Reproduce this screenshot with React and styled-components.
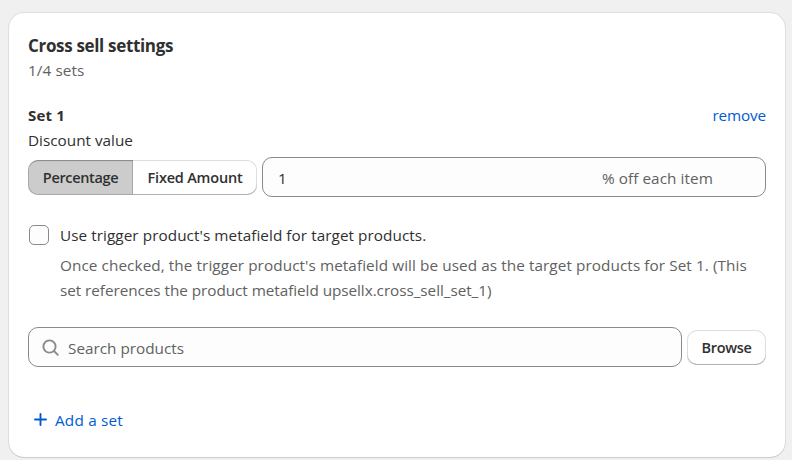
import React, { useState } from "react";
import styled, { createGlobalStyle, css } from "styled-components";

const COLOR = {
  PAGE: "#f0f0f0",
  TEXT: "#303030",
  SUBDUED: "#616161",
  LINK: "#005bd3",
  BORDER: "#8a8a8a",
  FIELD: "#fdfdfd",
  PRESSED: "#cccccc",
};

const App = () => {
  const [discountType, setDiscountType] = useState("percentage");
  const [discount, setDiscount] = useState("1");
  const [search, setSearch] = useState("");

  return (
    <>
      <GlobalStyle />
      <StyledCard>
        <StyledTitle>Cross sell settings</StyledTitle>
        <StyledCount>1/4 sets</StyledCount>

        <StyledSetHeader>
          <StyledSetName>Set 1</StyledSetName>
          <StyledRemove>remove</StyledRemove>
        </StyledSetHeader>
        <StyledLabel>Discount value</StyledLabel>
        <StyledDiscountRow>
          <StyledSegments>
            <StyledSegment
              $width={105}
              $spacing={-0.35}
              $pressed={discountType === "percentage"}
              onClick={() => setDiscountType("percentage")}
            >
              Percentage
            </StyledSegment>
            <StyledSegment
              $width={124}
              $spacing={-0.2}
              $pressed={discountType === "fixed"}
              onClick={() => setDiscountType("fixed")}
            >
              Fixed Amount
            </StyledSegment>
          </StyledSegments>
          <StyledField $padding="2px 52px 0 15px">
            <StyledInput
              value={discount}
              onChange={(e) => setDiscount(e.target.value)}
            />
            <StyledSuffix>% off each item</StyledSuffix>
          </StyledField>
        </StyledDiscountRow>

        <StyledCheckRow>
          <StyledCheckbox type="checkbox" />
          <div>
            <StyledCheckLabel>
              Use trigger product's metafield for target products.
            </StyledCheckLabel>
            <StyledHelp>
              <StyledHelpLine $spacing={0.08}>
                Once checked, the trigger product's metafield will be used as
                the target products for Set 1. (This
              </StyledHelpLine>
              <StyledHelpLine $spacing={-0.05}>
                set references the product metafield upsellx.cross_sell_set_1)
              </StyledHelpLine>
            </StyledHelp>
          </div>
        </StyledCheckRow>

        <StyledSearchRow>
          <StyledField $padding="2px 12px 0 13px">
            <SearchIcon />
            <StyledInput
              placeholder="Search products"
              value={search}
              onChange={(e) => setSearch(e.target.value)}
            />
          </StyledField>
          <StyledBrowse>Browse</StyledBrowse>
        </StyledSearchRow>

        <StyledAddSet>
          <PlusIcon />
          Add a set
        </StyledAddSet>
      </StyledCard>
    </>
  );
};

export default App;

const SearchIcon = () => (
  <StyledSearchIcon viewBox="0 0 18 18">
    <circle cx="7.5" cy="7.5" r="6.1" />
    <path d="M12 12l3.8 3.8" />
  </StyledSearchIcon>
);

const PlusIcon = () => (
  <StyledPlusIcon viewBox="0 0 13 13">
    <path d="M6.5 1v11M1 6.5h11" />
  </StyledPlusIcon>
);

const GlobalStyle = createGlobalStyle`
  * {
    box-sizing: border-box;
  }

  body {
    margin: 0;
    height: 460px;
    overflow: hidden;
    background: ${COLOR.PAGE};
    color: ${COLOR.TEXT};
    font: 400 15.3px/25px "Open Sans", "Noto Sans", sans-serif;
  }

  button,
  input {
    margin: 0;
    padding: 0;
    border: 0;
    background: none;
    color: inherit;
    font: inherit;
  }
`;

const buttonShadow = css`
  box-shadow: inset 0 -1px 0 #b0b0b0, inset 0 0 0 1px #dedede;
`;

const StyledCard = styled.main`
  display: flex;
  flex-direction: column;
  width: 776px;
  height: 444px;
  margin: 13px 0 0 9px;
  padding: 20px 19px;
  border-radius: 15px;
  background: #fff;
  box-shadow: 0 1px 0 #cccccc, 0 0 0 1px #dedede;
`;

const StyledTitle = styled.h2`
  margin: 0;
  font-size: 17px;
  font-weight: 700;
  letter-spacing: -0.33px;
`;

const StyledCount = styled.div`
  color: ${COLOR.SUBDUED};
  letter-spacing: 0.1px;
`;

const StyledSetHeader = styled.div`
  display: flex;
  justify-content: space-between;
  margin-top: 20px;
`;

const StyledSetName = styled.strong`
  font-size: 15px;
  font-weight: 700;
  letter-spacing: 0.2px;
`;

const StyledRemove = styled.button`
  color: ${COLOR.LINK};
  letter-spacing: -0.15px;
`;

const StyledLabel = styled.div``;

const StyledDiscountRow = styled.div`
  display: flex;
  align-items: center;
  gap: 5px;
  margin-top: 4px;
`;

const StyledSegments = styled.div`
  display: flex;
  flex: none;
  height: 35px;
  border-radius: 10px;
  overflow: hidden;
  ${buttonShadow};
`;

const StyledSegment = styled.button`
  width: ${({ $width }) => $width}px;
  font-size: 14.5px;
  font-weight: 600;
  letter-spacing: ${({ $spacing }) => $spacing}px;
  white-space: nowrap;
  ${({ $pressed }) =>
    $pressed &&
    css`
      border-radius: 10px 0 0 10px;
      background: ${COLOR.PRESSED};
      box-shadow: inset 0 2px 1px -1px #8a8a8a, inset 0 0 0 1px #a8a8a8;
    `}
`;

const StyledField = styled.div`
  display: flex;
  flex: 1;
  align-items: center;
  height: 40px;
  padding: ${({ $padding }) => $padding};
  border: 1px solid ${COLOR.BORDER};
  border-radius: 10px;
  background: ${COLOR.FIELD};
`;

const StyledInput = styled.input`
  flex: 1;
  min-width: 0;
  outline: none;

  &::placeholder {
    color: ${COLOR.SUBDUED};
    opacity: 1;
  }
`;

const StyledSuffix = styled.span`
  color: ${COLOR.SUBDUED};
  letter-spacing: 0.08px;
`;

const StyledCheckRow = styled.label`
  display: flex;
  gap: 11px;
  margin-top: 26px;
  padding-left: 1px;
`;

const StyledCheckbox = styled.input`
  appearance: none;
  flex: none;
  width: 20px;
  height: 20px;
  margin-top: 2px;
  border: 1px solid ${COLOR.BORDER};
  border-radius: 5px;
  background: ${COLOR.FIELD};
`;

const StyledCheckLabel = styled.div`
  letter-spacing: 0.06px;
`;

const StyledHelp = styled.div`
  margin-top: 5px;
  color: ${COLOR.SUBDUED};
`;

const StyledHelpLine = styled.div`
  letter-spacing: ${({ $spacing }) => $spacing}px;
  white-space: nowrap;
`;

const StyledSearchRow = styled.div`
  display: flex;
  align-items: center;
  gap: 5px;
  margin-top: 24px;
`;

const StyledBrowse = styled.button`
  width: 79px;
  height: 35px;
  border-radius: 10px;
  font-size: 14.5px;
  font-weight: 600;
  letter-spacing: -0.35px;
  ${buttonShadow};
`;

const StyledAddSet = styled.button`
  display: flex;
  align-items: center;
  align-self: flex-start;
  gap: 8px;
  margin-top: 41px;
  padding-left: 6px;
  color: ${COLOR.LINK};
  letter-spacing: 0.2px;
`;

const StyledSearchIcon = styled.svg`
  flex: none;
  width: 18px;
  height: 18px;
  margin: -1px 8px 0 0;
  fill: none;
  stroke: ${COLOR.BORDER};
  stroke-width: 1.9;
  stroke-linecap: round;
`;

const StyledPlusIcon = styled.svg`
  width: 13px;
  height: 13px;
  margin-top: -2px;
  fill: none;
  stroke: ${COLOR.LINK};
  stroke-width: 1.9;
  stroke-linecap: round;
`;
